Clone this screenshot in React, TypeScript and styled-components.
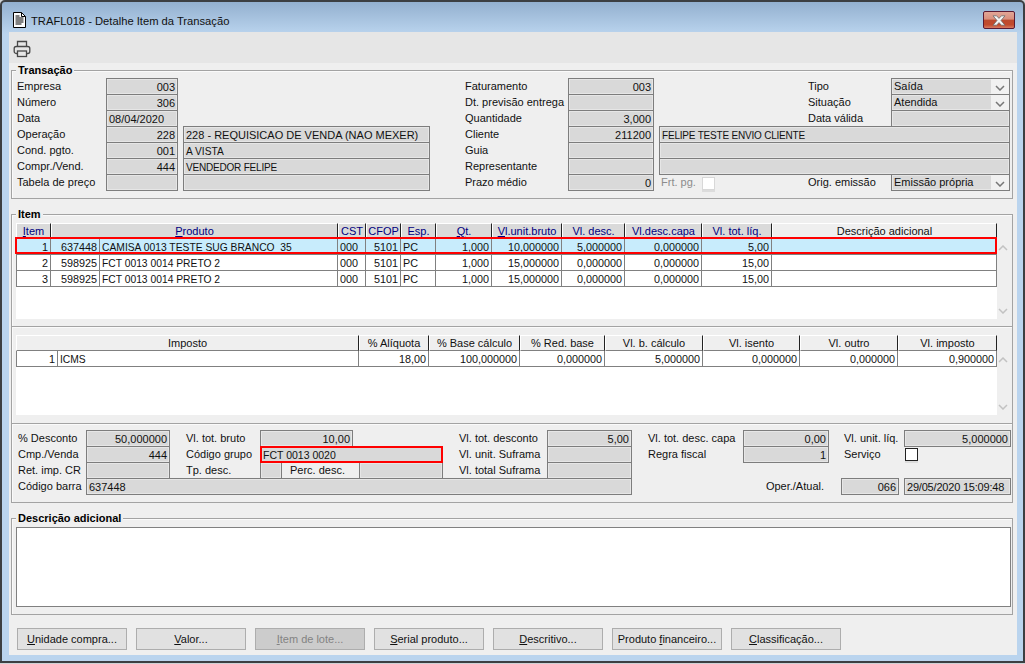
import React from "react";
import styled, { createGlobalStyle } from "styled-components";

const Global = createGlobalStyle`
  html, body { margin: 0; padding: 0; background: #cfd3d6; }
  body { font-family: "Liberation Sans", Arial, sans-serif; font-size: 11px; color: #000; }
`;

const Window = styled.div`
  box-sizing: border-box;
  width: 1025px;
  height: 663px;
  border: 2px solid #3c3f42;
  border-radius: 5px 5px 0 0;
  background: linear-gradient(180deg, #93b0cf 0, #bad4ee 32px);
  display: flex;
  flex-direction: column;
`;
const TitleBar = styled.div`
  height: 30px;
  flex: none;
  display: flex;
  align-items: flex-start;
  padding: 9px 8px 0 11px;
  box-sizing: border-box;
`;
const Title = styled.div`
  font-size: 11.2px;
  line-height: 16px;
  margin: 2px 0 0 5px;
  color: #111;
  flex: 1;
`;
const CloseButton = styled.div`
  width: 32px;
  height: 18px;
  box-sizing: border-box;
  border: 1px solid #5b1a32;
  border-radius: 2px;
  background: linear-gradient(180deg, #e2a697 0, #d98f7d 45%, #bc4a2e 50%, #c24a2c 80%, #d67a62 100%);
  display: flex;
  align-items: center;
  justify-content: center;
`;
const Client = styled.div`
  flex: none;
  height: 623px;
  margin: 0 6px 0 7px;
  background: #efefef;
  display: flex;
  flex-direction: column;
`;
const Toolbar = styled.div`
  height: 31px;
  flex: none;
  background: #e6e6e6;
  display: flex;
  align-items: center;
  padding: 3px 0 0 4px;
  box-sizing: border-box;
`;
const Group = styled.section<{ $h: number; $top: number; $pad: string }>`
  position: relative;
  box-sizing: border-box;
  flex: none;
  height: ${(p) => p.$h}px;
  margin: ${(p) => p.$top}px 4px 0 2px;
  padding: ${(p) => p.$pad};
  border: 1px solid #a3a3a3;
  box-shadow: inset 1px 1px 0 #fafafa;
`;
const Legend = styled.div`
  position: absolute;
  top: -7px;
  left: 4px;
  padding: 0 2px;
  background: #efefef;
  font-weight: bold;
  line-height: 13px;
  color: #000;
`;
const TwoForms = styled.div`
  display: flex;
  gap: 35px;
`;
const Form = styled.div<{ $cols: string; $rows: number }>`
  display: grid;
  grid-template-columns: ${(p) => p.$cols};
  grid-template-rows: repeat(${(p) => p.$rows}, 16px);
`;
const Label = styled.div<{ $col?: string; $row: number; $end?: boolean; $indent?: number }>`
  grid-column: ${(p) => p.$col ?? "1 / 2"};
  grid-row: ${(p) => p.$row};
  line-height: 17px;
  white-space: nowrap;
  color: #111;
  text-align: ${(p) => (p.$end ? "right" : "left")};
  padding-right: ${(p) => (p.$end ? 5 : 0)}px;
  padding-left: ${(p) => p.$indent ?? 0}px;
`;
const Field = styled.div<{ $col?: string; $row: number; $right?: boolean; $mark?: boolean; $fs?: number; $ls?: number }>`
  grid-column: ${(p) => p.$col ?? "2 / 3"};
  grid-row: ${(p) => p.$row};
  box-sizing: border-box;
  height: 17px;
  position: relative;
  z-index: ${(p) => (p.$mark ? 1 : 0)};
  border: ${(p) => (p.$mark ? "2px solid #f00" : "1px solid #7d7d7d")};
  background: #d9d9d9;
  box-shadow: ${(p) => (p.$mark ? "none" : "inset 0 0 0 1px #e6e6e6")};
  font-size: ${(p) => p.$fs ?? 11}px;
  letter-spacing: ${(p) => p.$ls ?? 0}px;
  line-height: ${(p) => (p.$mark ? 14 : p.$fs ? 17 : 16)}px;
  padding: 0 ${(p) => (p.$mark ? 1 : 2)}px;
  text-align: ${(p) => (p.$right ? "right" : "left")};
  white-space: nowrap;
  overflow: hidden;
  color: #111;
`;
const Combo = styled(Field)`
  display: flex;
  padding: 0 0 0 2px;
  line-height: 15px;
`;
const ComboText = styled.span`
  flex: 1;
`;
const ComboArrow = styled.span`
  width: 18px;
  background: #f1f1f1;
  display: flex;
  align-items: center;
  justify-content: center;
  padding-top: 3px;
`;
const FrtCell = styled.div`
  grid-column: 4 / 5;
  grid-row: 7;
  display: flex;
  align-items: flex-start;
  gap: 6px;
  padding-left: 2px;
  color: #8c8c8c;
  line-height: 17px;
`;
const CheckBox = styled.span<{ $dim?: boolean }>`
  display: block;
  box-sizing: border-box;
  width: 13px;
  height: 13px;
  margin-top: ${(p) => (p.$dim ? 3 : 0)}px;
  background: #fff;
  border: 1px solid ${(p) => (p.$dim ? "#d8d8d8" : "#222")};
  box-shadow: 0 2px 0 #dcdcdc;
`;
const CheckCell = styled.div<{ $col: string; $row: number }>`
  grid-column: ${(p) => p.$col};
  grid-row: ${(p) => p.$row};
  padding: 2px 0 0 1px;
`;

const ListFrame = styled.div<{ $h: number }>`
  display: flex;
  height: ${(p) => p.$h}px;
`;
const List = styled.div`
  width: 981px;
  flex: none;
  display: flex;
  flex-direction: column;
`;
const HeadRow = styled.div<{ $cols: string }>`
  display: grid;
  grid-template-columns: ${(p) => p.$cols};
  height: 16px;
  flex: none;
`;
const HeadCell = styled.div<{ $link?: boolean }>`
  box-sizing: border-box;
  text-align: center;
  line-height: 14px;
  white-space: nowrap;
  overflow: hidden;
  color: ${(p) => (p.$link ? "#000080" : "#111")};
  background: ${(p) => (p.$link ? "#dadada" : "#efefef")};
  border-top: 1px solid #fff;
  border-left: 1px solid #fff;
  border-right: 1px solid #222;
  border-bottom: 1px solid #808080;
`;
const ListBody = styled.div`
  flex: 1;
  background: #fff;
`;
const Row = styled.div<{ $cols: string; $sel?: boolean }>`
  display: grid;
  grid-template-columns: ${(p) => p.$cols};
  height: 16px;
  position: relative;
  background: ${(p) => (p.$sel ? "#c8ecfc" : "#fff")};
  &::after {
    content: "";
    display: ${(p) => (p.$sel ? "block" : "none")};
    position: absolute;
    top: -2px;
    bottom: 1px;
    left: -1px;
    right: 0;
    border: 2px solid #f00;
    pointer-events: none;
  }
`;
const Cell = styled.div<{ $right?: boolean; $first?: boolean; $narrow?: boolean }>`
  box-sizing: border-box;
  height: 16px;
  line-height: ${(p) => (p.$narrow ? 17 : 16)}px;
  font-size: ${(p) => (p.$narrow ? 10.3 : 10.8)}px;
  padding: 0 ${(p) => (p.$right ? 2 : 0)}px 0 ${(p) => (p.$right ? 0 : 2)}px;
  text-align: ${(p) => (p.$right ? "right" : "left")};
  border-right: 1px solid #808080;
  border-bottom: 1px solid #808080;
  border-left: ${(p) => (p.$first ? "1px solid #808080" : "0")};
  white-space: pre;
  overflow: hidden;
  color: #111;
`;
const ScrollRail = styled.div`
  flex: none;
  width: 12px;
  margin-top: 16px;
  padding: 6px 0 5px 0;
  box-sizing: border-box;
  display: flex;
  flex-direction: column;
  justify-content: space-between;
  align-items: center;
`;
const TextBox = styled.div`
  height: 80px;
  box-sizing: border-box;
  background: #fff;
  border: 1px solid #808080;
`;
const ButtonBar = styled.div`
  display: flex;
  gap: 9px;
  margin: 13px 0 0 8px;
`;
const Button = styled.div<{ $off?: boolean }>`
  box-sizing: border-box;
  width: 110px;
  height: 22px;
  line-height: 20px;
  text-align: center;
  border: 1px solid #adadad;
  background: ${(p) => (p.$off ? "#cccccc" : "#e1e1e1")};
  color: ${(p) => (p.$off ? "#838383" : "#111")};
`;

const DocIcon = () => (
  <svg width="13" height="16" viewBox="0 0 13 16" style={{ flex: "none", marginTop: 1 }}>
    <path d="M.5.5h8l4 4v11H.5z" fill="#fff" stroke="#000" />
    <path d="M8.5.5v4h4" fill="none" stroke="#000" />
    <path d="M2.5 4h4M2.5 6h8M2.5 8h8M2.5 10h8M2.5 12h6" stroke="#000" strokeWidth="1" />
  </svg>
);
const PrintIcon = () => (
  <svg width="18" height="18" viewBox="0 0 18 18" fill="none" stroke="#484848" strokeWidth="1.3">
    <path d="M4.5 6.5V1.5h9v5" />
    <rect x="1.2" y="6.5" width="15.6" height="7" rx="2" />
    <rect x="4.5" y="11" width="9" height="5.5" fill="#e6e6e6" />
  </svg>
);
const CloseGlyph = () => (
  <svg width="16" height="11" viewBox="0 0 16 11">
    <path d="M2 .8h3.6L8 3.4 10.4.8H14L10 5.5l4 4.7h-3.6L8 7.6l-2.4 2.6H2l4-4.7z" fill="#f4f4f4" stroke="#6b6b6b" strokeWidth=".8" />
  </svg>
);
const Chevron = ({ up, color = "#c2c2c2" }: { up?: boolean; color?: string }) => (
  <svg width="10" height="6" viewBox="0 0 10 6" fill="none" stroke={color} strokeWidth="1.5">
    <path d={up ? "M1 5l4-4 4 4" : "M1 1l4 4 4-4"} />
  </svg>
);
const Accel = ({ text, n = 1 }: { text: string; n?: number }) => (
  <>
    <u>{text.slice(0, n)}</u>
    {text.slice(n)}
  </>
);

const itemCols = "35px 49px 238px 28px 35px 35px 56px 70px 63px 77px 70px 225px";
const itemHeadCols = "35px 287px 28px 35px 35px 56px 70px 63px 77px 70px 225px";
const itemHeads: [string, boolean][] = [
  ["Item", true], ["Produto", true], ["CST", false], ["CFOP", false], ["Esp.", false], ["Qt.", true],
  ["Vl.unit.bruto", true], ["Vl. desc.", false], ["Vl.desc.capa", false], ["Vl. tot. líq.", false],
];
const itemRows = [
  ["1", "637448", "CAMISA 0013 TESTE SUG BRANCO  35", "000", "5101", "PC", "1,000", "10,000000", "5,000000", "0,000000", "5,00", ""],
  ["2", "598925", "FCT 0013 0014 PRETO 2", "000", "5101", "PC", "1,000", "15,000000", "0,000000", "0,000000", "15,00", ""],
  ["3", "598925", "FCT 0013 0014 PRETO 2", "000", "5101", "PC", "1,000", "15,000000", "0,000000", "0,000000", "15,00", ""],
];
const itemRight = [true, true, false, false, true, false, true, true, true, true, true, false];

const taxCols = "42px 301px 70px 91px 85px 98px 97px 98px 99px";
const taxHeadCols = "343px 70px 91px 85px 98px 97px 98px 99px";
const taxHeads = ["Imposto", "% Alíquota", "% Base cálculo", "% Red. base", "Vl. b. cálculo", "Vl. isento", "Vl. outro", "Vl. imposto"];
const taxRow = ["1", "ICMS", "18,00", "100,000000", "0,000000", "5,000000", "0,000000", "0,000000", "0,900000"];

const leftLabels = ["Empresa", "Número", "Data", "Operação", "Cond. pgto.", "Compr./Vend.", "Tabela de preço"];
const leftValues = ["003", "306", "", "228", "001", "444", ""];
const midLabels = ["Faturamento", "Dt. previsão entrega", "Quantidade", "Cliente", "Guia", "Representante", "Prazo médio"];
const midValues = ["003", "", "3,000", "211200", "", "", "0"];
const buttons: [string, boolean, number][] = [
  ["Unidade compra...", false, 1], ["Valor...", false, 1], ["Item de lote...", true, 1], ["Serial produto...", false, 1],
  ["Descritivo...", false, 1], ["Produto financeiro...", false, 9], ["Classificação...", false, 1],
];
const footCols = "68px 84px 16px 74px 22px 71px 6px 84px 16px 88px 85px 16px 95px 86px 12px 3px 55px 5px 107px";

export default function App() {
  return (
    <Window>
      <Global />
      <TitleBar>
        <DocIcon />
        <Title>TRAFL018 - Detalhe Item da Transação</Title>
        <CloseButton><CloseGlyph /></CloseButton>
      </TitleBar>
      <Client>
        <Toolbar><PrintIcon /></Toolbar>

        <Group $h={129} $top={7} $pad="7px 0 0 5px">
          <Legend>Transação</Legend>
          <TwoForms>
            <Form $cols="89px 72px 5px 247px" $rows={7}>
              {leftLabels.map((t, i) => <Label key={t} $row={i + 1}>{t}</Label>)}
              {leftValues.map((v, i) =>
                i === 2
                  ? <Field key={i} $row={3}>08/04/2020</Field>
                  : <Field key={i} $row={i + 1} $right>{v}</Field>
              )}
              <Field $col="4 / 5" $row={4}>228 - REQUISICAO DE VENDA (NAO MEXER)</Field>
              <Field $col="4 / 5" $row={5} $fs={10.2}>A VISTA</Field>
              <Field $col="4 / 5" $row={6} $fs={10} $ls={-0.2}>VENDEDOR FELIPE</Field>
              <Field $col="4 / 5" $row={7} />
            </Form>
            <Form $cols="103px 86px 5px 149px 83px 119px" $rows={7}>
              {midLabels.map((t, i) => <Label key={t} $row={i + 1}>{t}</Label>)}
              {midValues.map((v, i) => <Field key={i} $row={i + 1} $right>{v}</Field>)}
              <Field $col="4 / 7" $row={4} $fs={10} $ls={-0.2}>FELIPE TESTE ENVIO CLIENTE</Field>
              <Field $col="4 / 7" $row={5} />
              <Field $col="4 / 7" $row={6} />
              <FrtCell>Frt. pg.<CheckBox $dim /></FrtCell>
              <Label $col="5 / 6" $row={1}>Tipo</Label>
              <Label $col="5 / 6" $row={2}>Situação</Label>
              <Label $col="5 / 6" $row={3}>Data válida</Label>
              <Label $col="5 / 6" $row={7}>Orig. emissão</Label>
              <Combo $col="6 / 7" $row={1}><ComboText>Saída</ComboText><ComboArrow><Chevron color="#777" /></ComboArrow></Combo>
              <Combo $col="6 / 7" $row={2}><ComboText>Atendida</ComboText><ComboArrow><Chevron color="#777" /></ComboArrow></Combo>
              <Field $col="6 / 7" $row={3} />
              <Combo $col="6 / 7" $row={7}><ComboText>Emissão própria</ComboText><ComboArrow><Chevron color="#777" /></ComboArrow></Combo>
            </Form>
          </TwoForms>
        </Group>

        <Group $h={113} $top={15} $pad="8px 0 0 4px">
          <Legend>Item</Legend>
          <ListFrame $h={96}>
            <List>
              <HeadRow $cols={itemHeadCols}>
                {itemHeads.map(([t, link]) => (
                  <HeadCell key={t} $link>{link ? <Accel text={t} /> : t}</HeadCell>
                ))}
                <HeadCell>Descrição adicional</HeadCell>
              </HeadRow>
              <ListBody>
                {itemRows.map((r, i) => (
                  <Row key={i} $cols={itemCols} $sel={i === 0}>
                    {r.map((c, j) => <Cell key={j} $right={itemRight[j]} $first={j === 0} $narrow={j === 2}>{c}</Cell>)}
                  </Row>
                ))}
              </ListBody>
            </List>
            <ScrollRail><Chevron up /><Chevron /></ScrollRail>
          </ListFrame>
        </Group>

        <Group $h={98} $top={-1} $pad="8px 0 0 4px">
          <ListFrame $h={80}>
            <List>
              <HeadRow $cols={taxHeadCols}>
                {taxHeads.map((t) => <HeadCell key={t}>{t}</HeadCell>)}
              </HeadRow>
              <ListBody>
                <Row $cols={taxCols}>
                  {taxRow.map((c, j) => <Cell key={j} $right={j !== 1} $first={j === 0} $narrow={j === 1}>{c}</Cell>)}
                </Row>
              </ListBody>
            </List>
            <ScrollRail><Chevron up /><Chevron /></ScrollRail>
          </ListFrame>
        </Group>

        <Group $h={80} $top={-1} $pad="6px 0 0 6px">
          <Form $cols={footCols} $rows={4}>
            <Label $row={1}>% Desconto</Label>
            <Field $row={1} $right>50,000000</Field>
            <Label $col="4 / 5" $row={1}>Vl. tot. bruto</Label>
            <Field $col="5 / 7" $row={1} $right>10,00</Field>
            <Label $col="10 / 11" $row={1}>Vl. tot. desconto</Label>
            <Field $col="11 / 12" $row={1} $right>5,00</Field>
            <Label $col="13 / 14" $row={1}>Vl. tot. desc. capa</Label>
            <Field $col="14 / 15" $row={1} $right>0,00</Field>
            <Label $col="17 / 19" $row={1}>Vl. unit. líq.</Label>
            <Field $col="19 / 20" $row={1} $right>5,000000</Field>

            <Label $row={2}>Cmp./Venda</Label>
            <Field $row={2} $right>444</Field>
            <Label $col="4 / 5" $row={2}>Código grupo</Label>
            <Field $col="5 / 9" $row={2} $mark $fs={10.5}>FCT 0013 0020</Field>
            <Label $col="10 / 11" $row={2}>Vl. unit. Suframa</Label>
            <Field $col="11 / 12" $row={2} />
            <Label $col="13 / 14" $row={2}>Regra fiscal</Label>
            <Field $col="14 / 15" $row={2} $right>1</Field>
            <Label $col="17 / 19" $row={2}>Serviço</Label>
            <CheckCell $col="19 / 20" $row={2}><CheckBox /></CheckCell>

            <Label $row={3}>Ret. imp. CR</Label>
            <Field $row={3} />
            <Label $col="4 / 5" $row={3}>Tp. desc.</Label>
            <Field $col="5 / 6" $row={3} />
            <Label $col="6 / 8" $row={3} $indent={8}>Perc. desc.</Label>
            <Field $col="8 / 9" $row={3} />
            <Label $col="10 / 11" $row={3}>Vl. total Suframa</Label>
            <Field $col="11 / 12" $row={3} />

            <Label $row={4}>Código barra</Label>
            <Field $col="2 / 12" $row={4}>637448</Field>
            <Label $col="13 / 15" $row={4} $end>Oper./Atual.</Label>
            <Field $col="16 / 18" $row={4} $right>066</Field>
            <Field $col="19 / 20" $row={4} $ls={-0.2}>29/05/2020 15:09:48</Field>
          </Form>
        </Group>

        <Group $h={97} $top={15} $pad="8px 1px 0 4px">
          <Legend>Descrição adicional</Legend>
          <TextBox />
        </Group>

        <ButtonBar>
          {buttons.map(([t, off, n]) => (
            <Button key={t} $off={off}>
              {n === 1 ? <Accel text={t} /> : <>{t.slice(0, n - 1)}<u>{t[n - 1]}</u>{t.slice(n)}</>}
            </Button>
          ))}
        </ButtonBar>
      </Client>
    </Window>
  );
}
